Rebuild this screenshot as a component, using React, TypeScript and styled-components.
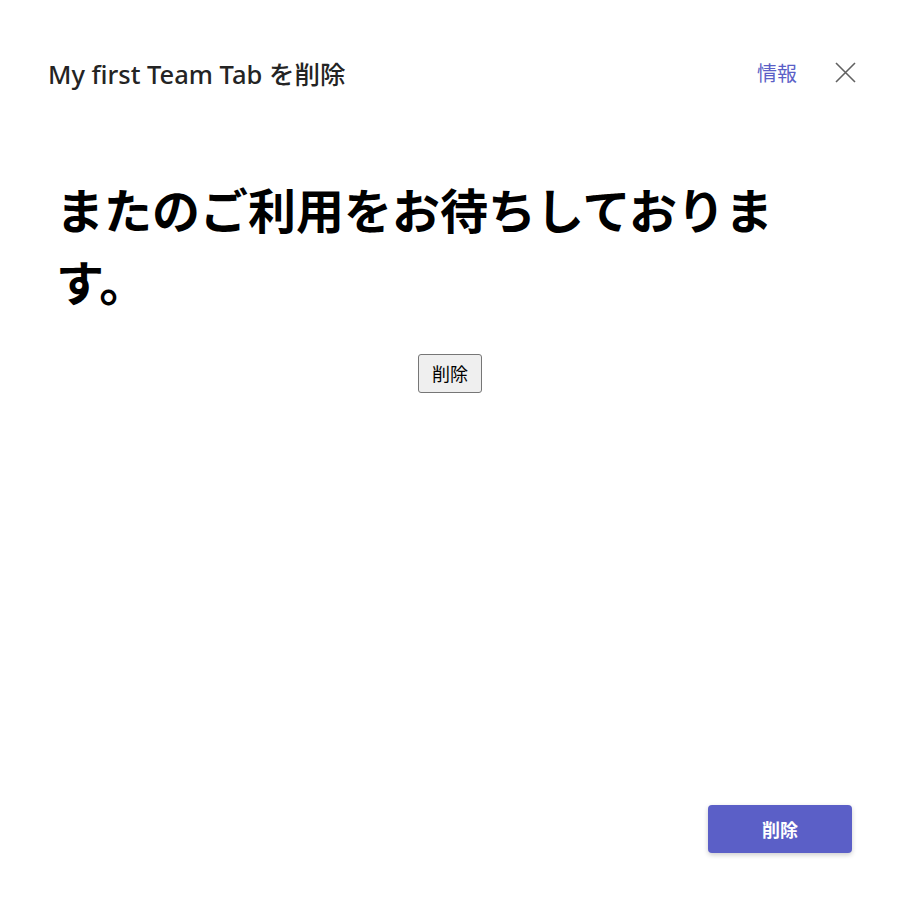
import React from 'react'
import styled, { createGlobalStyle } from 'styled-components'

const Global = createGlobalStyle`
  html, body {
    margin: 0;
    padding: 0;
    background: #ffffff;
  }
  body {
    font-family: "Noto Sans", "Noto Sans CJK JP", sans-serif;
  }
`

const Dialog = styled.div`
  box-sizing: border-box;
  height: 910px;
  display: flex;
  flex-direction: column;
  padding: 55px 43px 57px 48px;
  background: #ffffff;
`

const Header = styled.header`
  display: flex;
  align-items: center;
  justify-content: space-between;
  height: 34px;
`

const Title = styled.h2`
  margin: 0;
  font-family: "Noto Sans", "Noto Sans CJK JP", sans-serif;
  font-size: 25.5px;
  font-weight: 500;
  color: #242424;
`

const Actions = styled.div`
  display: flex;
  align-items: center;
  gap: 37px;
`

const InfoLink = styled.a`
  font-family: "Noto Sans CJK JP", sans-serif;
  font-size: 20px;
  color: #5b5fc7;
  text-decoration: none;
  cursor: pointer;
`

const CloseButton = styled.button`
  display: flex;
  align-items: center;
  justify-content: center;
  width: 22px;
  height: 22px;
  padding: 0;
  border: none;
  background: none;
  cursor: pointer;
`

const Content = styled.main`
  flex: 1;
  padding: 83px 12px 0 8px;
  display: flex;
  flex-direction: column;
`

const Farewell = styled.h1`
  margin: 0;
  max-width: 740px;
  font-family: "Noto Sans CJK JP", sans-serif;
  font-size: 48px;
  font-weight: 700;
  line-height: 72px;
  color: #000000;
`

const Center = styled.div`
  display: flex;
  justify-content: center;
  padding: 38px 0 0 0;
`

const PlainButton = styled.button`
  font-family: "Noto Sans CJK JP", sans-serif;
  font-size: 18px;
  line-height: 25px;
  padding: 6px 13px;
  color: #000;
  background: #efefef;
  border: 1px solid #767676;
  border-radius: 3px;
`

const Footer = styled.footer`
  display: flex;
  justify-content: flex-end;
  padding-right: 4px;
`

const PrimaryButton = styled.button`
  width: 144px;
  height: 48px;
  border: none;
  border-radius: 4px;
  background: #5b5fc7;
  color: #ffffff;
  font-family: "Noto Sans CJK JP", sans-serif;
  font-size: 18px;
  font-weight: 700;
  box-shadow: 0 2px 5px rgba(0, 0, 0, 0.2);
  cursor: pointer;
`

export default function App() {
  return (
    <>
      <Global />
      <Dialog>
        <Header>
          <Title>My first Team Tab を削除</Title>
          <Actions>
            <InfoLink>情報</InfoLink>
            <CloseButton aria-label="閉じる">
              <svg width="21" height="21" viewBox="0 0 21 21">
                <path d="M1 1 L20 20 M20 1 L1 20" stroke="#616161" strokeWidth="1.6" fill="none" />
              </svg>
            </CloseButton>
          </Actions>
        </Header>
        <Content>
          <Farewell>またのご利用をお待ちしております。</Farewell>
          <Center>
            <PlainButton>削除</PlainButton>
          </Center>
        </Content>
        <Footer>
          <PrimaryButton>削除</PrimaryButton>
        </Footer>
      </Dialog>
    </>
  )
}
